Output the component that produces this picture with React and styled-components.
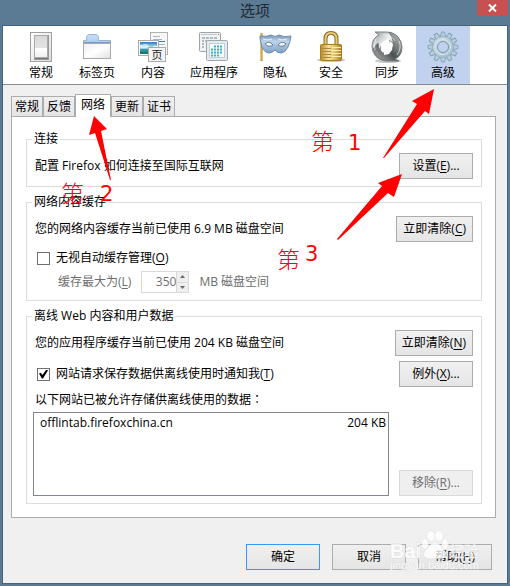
import React, { useState } from "react";
import styled, { createGlobalStyle, css } from "styled-components";

const GlobalStyle = createGlobalStyle`
  *, *::before, *::after { box-sizing: border-box; }
  body { margin: 0; background: #5b7b95; }
  body, button, input, table {
    font-family: "Open Sans", "Noto Sans CJK SC", sans-serif;
    font-size: 12px;
    line-height: 16px;
    color: #000;
  }
  u { text-underline-offset: 2px; }
`;

const Frame = styled.div`
  position: relative;
  min-height: 100vh;
  display: flex;
  flex-direction: column;
  background: #5b7b95;
  padding: 0 2px 2px;
`;

const TitleBar = styled.header`
  display: grid;
  grid-template-columns: 1fr auto 1fr;
  height: 25px;
`;

const Title = styled.h1`
  grid-column: 2;
  margin: 0;
  font-size: 15px;
  font-weight: 400;
  line-height: 20px;
  color: #1d2730;
`;

const CloseButton = styled.button`
  justify-self: end;
  display: grid;
  place-items: center;
  width: 31px;
  height: 16px;
  padding: 0;
  border: 0;
  background: #c75050;
`;

const Dialog = styled.main`
  flex: 1;
  display: flex;
  flex-direction: column;
  border: 1px solid #45637c;
  background: #f0f0f0;
`;

const Toolbar = styled.nav`
  display: flex;
  gap: 2px;
  height: 59px;
  padding: 0 11px;
  background: #fff;
  border-bottom: 1px solid #888;
`;

const Category = styled.button`
  display: flex;
  flex-direction: column;
  align-items: center;
  gap: 2px;
  min-width: 54px;
  padding: 5px 8px 0;
  border: 0;
  white-space: nowrap;
  background: ${(p) => (p.$active ? "#c1d2ee" : "transparent")};
`;

const Body = styled.div`
  flex: 1;
  display: flex;
  flex-direction: column;
  padding: 9px 11px 13px 8px;
`;

const Tabs = styled.div`
  display: flex;
  align-items: flex-end;
  height: 22px;
`;

const Tab = styled.button`
  height: 20px;
  padding: 0 3px;
  width: 32px;
  border: 1px solid #acacac;
  border-bottom: 0;
  background: linear-gradient(#f0f0f0, #e5e5e5);
  ${(p) => p.$active && css`
    width: 36px;
    height: 23px;
    margin-bottom: -1px;
    padding-bottom: 3px;
    background: #fff;
    z-index: 1;
  `}
`;

const Panel = styled.section`
  display: flex;
  flex-direction: column;
  gap: 7px;
  padding: 14px 13px 13px 14px;
  border: 1px solid #acacac;
  background: #fff;
`;

const Group = styled.fieldset`
  min-width: 0;
  margin: 0;
  padding: 6px 8px 7px;
  border: 1px solid #dcdcdc;
`;

const Legend = styled.legend`
  margin-left: -3px;
  padding: 0 2px;
`;

const Line = styled.div`
  display: flex;
  align-items: center;
  justify-content: space-between;
  min-height: ${(p) => p.$height || 26}px;
  margin-top: ${(p) => p.$top || 0}px;
`;

const PushButton = styled.button`
  min-width: 74px;
  height: 26px;
  padding: 0 6px;
  border: 1px solid ${(p) => (p.$primary ? "#3399ff" : "#acacac")};
  background: linear-gradient(#f0f0f0, #e5e5e5);
  white-space: nowrap;
  &:disabled {
    color: #6d6d6d;
    border-color: #d9d9d9;
    background: #efefef;
  }
`;

const CheckLabel = styled.label`
  display: flex;
  align-items: center;
  gap: 6px;
  padding-left: 2px;
`;

const Check = styled.input`
  appearance: none;
  display: grid;
  place-items: center;
  width: 13px;
  height: 13px;
  margin: 0;
  border: 1px solid #707070;
  background: #fff;
  &:checked::before {
    content: "";
    width: 9px;
    height: 9px;
    background: #000;
    clip-path: polygon(0 45%, 20% 35%, 38% 62%, 82% 0, 100% 8%, 45% 100%, 32% 100%);
  }
`;

const SizeRow = styled.div`
  display: flex;
  align-items: center;
  height: 22px;
  margin-top: 5px;
  padding-left: 23px;
  color: #6d6d6d;
`;

const Spinner = styled.span`
  display: flex;
  width: 48px;
  height: 22px;
  margin: 0 10px;
  border: 1px solid #d9d9d9;
`;

const SpinInput = styled.input`
  flex: 1;
  min-width: 0;
  padding: 0;
  border: 0;
  text-align: right;
  background: #fff;
  color: #6d6d6d;
`;

const SpinArrows = styled.span`
  display: grid;
  width: 12px;
  border-left: 1px solid #d9d9d9;
`;

const SpinButton = styled.button`
  display: grid;
  place-items: center;
  min-height: 0;
  padding: 0;
  border: 0;
  background: #efefef;
  & + & { border-top: 1px solid #d9d9d9; }
`;

const ListLabel = styled.div`
  margin-top: 4px;
`;

const WideColon = styled.span`
  font-family: "Noto Sans CJK JP", sans-serif;
`;

const ListArea = styled.div`
  display: flex;
  align-items: flex-end;
  justify-content: space-between;
  gap: 10px;
  margin-top: 4px;
`;

const ListBox = styled.div`
  flex: 1;
  height: 84px;
  margin-left: -2px;
  padding: 1px 2px;
  border: 1px solid #828790;
`;

const SiteTable = styled.table`
  width: 100%;
  border-collapse: collapse;
  td { padding: 0 0 0 4px; line-height: 18px; }
  td:last-child { padding: 0; text-align: right; }
`;

const Footer = styled.footer`
  display: flex;
  justify-content: flex-end;
  gap: 12px;
  margin-top: 26px;
  padding-right: 4px;
`;

const Overlay = styled.svg`
  position: absolute;
  left: 0;
  top: 0;
  z-index: 2;
  pointer-events: none;
`;

const Note = styled.span`
  position: absolute;
  z-index: 2;
  left: ${(p) => p.$x}px;
  top: ${(p) => p.$y}px;
  font-family: "DejaVu Sans", sans-serif;
  font-size: 21px;
  line-height: 24px;
  color: #f00;
  pointer-events: none;
  ${(p) => p.$han && css`
    font-family: "Noto Sans CJK SC", sans-serif;
    font-size: 23px;
    font-weight: 300;
  `}
`;

const Watermark = styled.div`
  position: absolute;
  z-index: 3;
  right: 28px;
  bottom: 13px;
  width: 92px;
  opacity: 0.8;
  pointer-events: none;
  svg { display: block; }
`;

const GeneralIcon = () => (
  <svg width="32" height="32" viewBox="0 0 32 32">
    <defs>
      <linearGradient id="sw" x2="0" y2="1"><stop stopColor="#d8d8d8" /><stop offset=".6" stopColor="#e4e4e4" /><stop offset=".61" stopColor="#fff" /><stop offset="1" stopColor="#eee" /></linearGradient>
      <linearGradient id="plate" x2="1" y2="1"><stop stopColor="#fff" /><stop offset="1" stopColor="#ddd" /></linearGradient>
    </defs>
    <rect x="5.500" y="1.500" width="21" height="29" fill="url(#plate)" stroke="#a0a0a0" />
    <rect x="9.500" y="4.500" width="14" height="24" fill="#777" stroke="#999" />
    <rect x="9.500" y="4.500" width="13" height="22" fill="url(#sw)" stroke="#aaa" />
    <path d="M10 17.500h12" stroke="#fff" />
  </svg>
);

const TabsIcon = () => (
  <svg width="32" height="32" viewBox="0 0 32 32">
    <defs>
      <linearGradient id="tb" x2="0" y2="1"><stop stopColor="#c9defa" /><stop offset="1" stopColor="#a8c9f3" /></linearGradient>
      <linearGradient id="tp" x2="1" y2="1"><stop stopColor="#eee" /><stop offset=".5" stopColor="#fff" /><stop offset="1" stopColor="#e0e0e0" /></linearGradient>
    </defs>
    <path d="M2.500 12V9.500H5.500V5.500l2-2h8l2 2V9.500h12V12" fill="url(#tb)" stroke="#9bb3d2" />
    <rect x="2.500" y="12.500" width="27" height="15" fill="url(#tp)" stroke="#aaa" />
    <path d="M2 11.500h28" stroke="#789bc7" />
  </svg>
);

const ContentIcon = () => (
  <svg width="32" height="32" viewBox="0 0 32 32">
    <defs>
      <linearGradient id="sky" x2="0" y2="1"><stop stopColor="#257dc4" /><stop offset=".5" stopColor="#c9eafb" /><stop offset=".62" stopColor="#3c9cad" /><stop offset="1" stopColor="#14704d" /></linearGradient>
    </defs>
    <rect x="13.500" y="1.500" width="17" height="22" fill="#f7f7f7" stroke="#b2b2b2" />
    <path d="M16 5.500h7M16 8.500h9M20 13.500h8M21 16.500h7" stroke="#aab3bd" />
    <path d="M22 10.500h6" stroke="#3a7c95" />
    <rect x="1.500" y="9.500" width="20" height="15" fill="#fff" stroke="#aaa" />
    <rect x="3" y="11" width="17" height="12" fill="url(#sky)" />
    <path d="M3 14l6-1 4 2-3 2H3zM13 18q4-5 7-3v3z" fill="#e7f7fc" opacity=".75" />
    <rect x="11.500" y="16.500" width="17" height="14" fill="#f4f4f4" stroke="#aaa" />
    <text x="20" y="28" textAnchor="middle" fontSize="11" fontFamily="Noto Sans CJK SC" fill="#222">页</text>
  </svg>
);

const AppsIcon = () => (
  <svg width="32" height="32" viewBox="0 0 32 32">
    <rect x="1.500" y="1.500" width="21" height="19" rx="1" fill="#f0f2f4" stroke="#9da3a8" />
    <path d="M3 3.500h16" stroke="#c2c8ce" />
    <path d="M20 3.500h1" stroke="#df6048" />
    <path d="M4 7h15M4 10h2M7 10h11M4 13h2M4 16h2" stroke="#777f88" strokeDasharray="3 1" />
    <rect x="8.500" y="9.500" width="21" height="20" rx="1" fill="#e3ebf0" stroke="#9fa8ad" />
    <rect x="11.500" y="12.500" width="15" height="14" fill="#fafdfd" stroke="#c2d0d4" />
    <path d="M16 15.500h9M13 18.500h12M13 21.500h12M13 24.500h8" stroke="#39afd0" strokeWidth="2" strokeDasharray="2 1" />
  </svg>
);

const PrivacyIcon = () => (
  <svg width="34" height="32" viewBox="0 0 34 32">
    <defs><linearGradient id="mask" x2="0" y2="1"><stop stopColor="#7393b5" /><stop offset=".35" stopColor="#bfd4e9" /><stop offset="1" stopColor="#7d9fc5" /></linearGradient></defs>
    <path d="M3.500 2v28" stroke="#b9831d" strokeWidth="2" /><path d="M3 2v27" stroke="#efca69" />
    <path d="M2 5Q9 6 13 4q4 3 8 0 5 3 12 1-1 7-3 11-3 6-7 6-4 0-6-3-3 3-6 3-7-1-8-10Q2 9 2 5z" fill="url(#mask)" stroke="#6c8cad" />
    <path d="M7 13q4-4 8 1-4 3-8-1zM20 14q4-5 8-1-4 4-8 1z" fill="#fff" stroke="#64809f" />
    <path d="M5 8q5 2 9 0M29 8q-5 2-9 0" stroke="#e8f2fa" fill="none" />
  </svg>
);

const SecurityIcon = () => (
  <svg width="32" height="32" viewBox="0 0 32 32">
    <defs><linearGradient id="gold"><stop stopColor="#b68a2c" /><stop offset=".4" stopColor="#f5e39e" /><stop offset=".7" stopColor="#dfbd63" /><stop offset="1" stopColor="#a9781f" /></linearGradient></defs>
    <ellipse cx="16" cy="29" rx="14" ry="2" fill="#c8c8c8" />
    <path d="M10.500 15V8q0-6 5.500-6t5.500 6v7" fill="none" stroke="#8b681d" strokeWidth="4" />
    <path d="M10.500 15V8q0-6 5.500-6t5.500 6v7" fill="none" stroke="#e2ca83" strokeWidth="2" />
    <rect x="5.500" y="13.500" width="21" height="16" rx="1" fill="url(#gold)" stroke="#aa7d25" />
    <path d="M7 17.500h9M7 20.500h9M7 23.500h9M7 26.500h9" stroke="#b1883a" />
    <path d="M17 16.500h9M17 19.500h9M17 22.500h9M17 25.500h9" stroke="#fff0aa" />
  </svg>
);

const SyncIcon = () => (
  <svg width="32" height="32" viewBox="0 0 32 32">
    <defs>
      <linearGradient id="silver" x2="1" y2="1"><stop stopColor="#8c9292" /><stop offset=".4" stopColor="#f0f2f2" /><stop offset="1" stopColor="#7f8586" /></linearGradient>
      <linearGradient id="steel" x1="1" x2="0" y2="1"><stop stopColor="#c8cccc" /><stop offset=".55" stopColor="#4b5050" /><stop offset="1" stopColor="#babdbd" /></linearGradient>
    </defs>
    <ellipse cx="17" cy="30" rx="13" ry="2" fill="#c8c8c8" />
    <path d="M15 30Q2 28 1 16 1 7 8 4L4 1h12q12 1 14 13l-5 6q0-8-8-11l1 3-7 1q-5 8 4 17z" fill="url(#silver)" stroke="#7c8181" />
    <path d="M18 1q12 3 13 15 0 9-7 12l4 2H16Q5 29 2 18l5-6q0 9 8 11l-1-3 7-1q4-8-3-18z" fill="url(#steel)" stroke="#747979" />
    <path d="M13 10l5-2v4h3v7l-3 4-5 1v-4h-3v-7z" fill="#fff" />
    <path d="M5 8Q2 13 4 19M12 4q9 0 12 6M26 24q5-7 2-14" fill="none" stroke="#fff" opacity=".6" />
  </svg>
);

const gearTeeth = Array.from({ length: 12 }, (_, i) => i * 30);
const AdvancedIcon = () => (
  <svg width="32" height="32" viewBox="0 0 32 32">
    <defs><linearGradient id="gear" x2="1" y2="1"><stop stopColor="#d4e2eb" /><stop offset="1" stopColor="#a1bccb" /></linearGradient></defs>
    {gearTeeth.map((a) => <path key={a} d="M13.500 6l1-5h3l1 5z" transform={`rotate(${a} 16 16)`} fill="#b9cedb" stroke="#86a4b9" />)}
    <circle cx="16" cy="16" r="10.500" fill="url(#gear)" stroke="#9ab5c5" />
    <circle cx="16" cy="16" r="7.500" fill="none" stroke="#d8e5ed" />
    <circle cx="16" cy="16" r="5.500" fill="#c1d2ee" stroke="#7799b0" />
  </svg>
);

const categories = [
  ["常规", GeneralIcon], ["标签页", TabsIcon], ["内容", ContentIcon], ["应用程序", AppsIcon],
  ["隐私", PrivacyIcon], ["安全", SecurityIcon], ["同步", SyncIcon], ["高级", AdvancedIcon],
];
const tabs = ["常规", "反馈", "网络", "更新", "证书"];

const Key = ({ children }) => <>(<u>{children}</u>)</>;

export default function App() {
  const [category, setCategory] = useState("高级");
  const [tab, setTab] = useState("网络");
  return (
    <Frame>
      <GlobalStyle />
      <TitleBar>
        <Title>选项</Title>
        <CloseButton aria-label="关闭">
          <svg width="9" height="8" viewBox="0 0 9 8"><path d="M1 0.500l7 7M8 0.500l-7 7" stroke="#fff" strokeWidth="2" /></svg>
        </CloseButton>
      </TitleBar>
      <Dialog>
        <Toolbar>
          {categories.map(([name, Icon]) => (
            <Category key={name} $active={category === name} onClick={() => setCategory(name)}><Icon />{name}</Category>
          ))}
        </Toolbar>
        <Body>
          <Tabs role="tablist">
            {tabs.map((name) => (
              <Tab key={name} role="tab" aria-selected={tab === name} $active={tab === name} onClick={() => setTab(name)}>{name}</Tab>
            ))}
          </Tabs>
          <Panel>
            <Group>
              <Legend>连接</Legend>
              <Line><span>配置 Firefox 如何连接至国际互联网</span><PushButton>设置<Key>E</Key>...</PushButton></Line>
            </Group>
            <Group>
              <Legend>网络内容缓存</Legend>
              <Line><span>您的网络内容缓存当前已使用 6.9 MB 磁盘空间</span><PushButton>立即清除<Key>C</Key></PushButton></Line>
              <Line $height={16} $top={8}>
                <CheckLabel><Check type="checkbox" /><span>无视自动缓存管理<Key>O</Key></span></CheckLabel>
              </Line>
              <SizeRow>
                <label htmlFor="cache-size">缓存最大为<Key>L</Key></label>
                <Spinner>
                  <SpinInput id="cache-size" defaultValue="350" inputMode="numeric" disabled />
                  <SpinArrows>
                    <SpinButton disabled aria-label="增加"><svg width="5" height="3"><path d="M0 3L2.500 0 5 3z" fill="#666" /></svg></SpinButton>
                    <SpinButton disabled aria-label="减少"><svg width="5" height="3"><path d="M0 0L2.500 3 5 0z" fill="#666" /></svg></SpinButton>
                  </SpinArrows>
                </Spinner>
                <span>MB 磁盘空间</span>
              </SizeRow>
            </Group>
            <Group>
              <Legend>离线 Web 内容和用户数据</Legend>
              <Line><span>您的应用程序缓存当前已使用 204 KB 磁盘空间</span><PushButton>立即清除<Key>N</Key></PushButton></Line>
              <Line $top={5}>
                <CheckLabel><Check type="checkbox" defaultChecked /><span>网站请求保存数据供离线使用时通知我<Key>T</Key></span></CheckLabel>
                <PushButton>例外<Key>X</Key>...</PushButton>
              </Line>
              <ListLabel id="sites-label">以下网站已被允许存储供离线使用的数据<WideColon lang="ja">：</WideColon></ListLabel>
              <ListArea>
                <ListBox>
                  <SiteTable aria-labelledby="sites-label"><tbody><tr><td>offlintab.firefoxchina.cn</td><td>204 KB</td></tr></tbody></SiteTable>
                </ListBox>
                <PushButton disabled>移除<Key>R</Key>...</PushButton>
              </ListArea>
            </Group>
          </Panel>
          <Footer>
            <PushButton $primary>确定</PushButton>
            <PushButton>取消</PushButton>
            <PushButton>帮助<Key>H</Key></PushButton>
          </Footer>
        </Body>
      </Dialog>
      <Overlay width="510" height="260" viewBox="0 0 510 260" fill="#f00">
        <path d="M434 89L412 101 417 104 383 158 384 158 425 111 429 114z" />
        <path d="M94 116L89 135 95 133 110 180 111 180 101 131 107 129z" />
        <path d="M402 174L378 183 382 186 337 239 338 240 388 193 394 197z" />
      </Overlay>
      <Note $han $x={311} $y={128}>第</Note><Note $x={348} $y={131}>1</Note>
      <Note $han $x={61} $y={180}>第</Note><Note $x={100} $y={182}>2</Note>
      <Note $han $x={277} $y={246}>第</Note><Note $x={305} $y={242}>3</Note>
      <Watermark>
        <svg width="92" height="44" viewBox="0 0 92 44" fill="#fff" stroke="#ddd" strokeWidth="1" paintOrder="stroke" fontFamily="Liberation Sans">
          <text x="0" y="29" fontSize="20" fontWeight="700">Bai</text>
          <ellipse cx="35" cy="15" rx="3" ry="5" />
          <ellipse cx="41" cy="7" rx="4" ry="5" />
          <ellipse cx="49" cy="7" rx="4" ry="5" />
          <ellipse cx="55" cy="15" rx="3" ry="5" />
          <path d="M45 14q4 0 7 5 6 5 3 9-3 3-10 1-7 2-10-1-3-4 3-9 3-5 7-5z" />
          <text x="59" y="28" fontSize="15" fontFamily="Noto Sans CJK SC">经验</text>
          <text x="0" y="40" fontSize="11">jingyan.baidu.com</text>
        </svg>
      </Watermark>
    </Frame>
  );
}
